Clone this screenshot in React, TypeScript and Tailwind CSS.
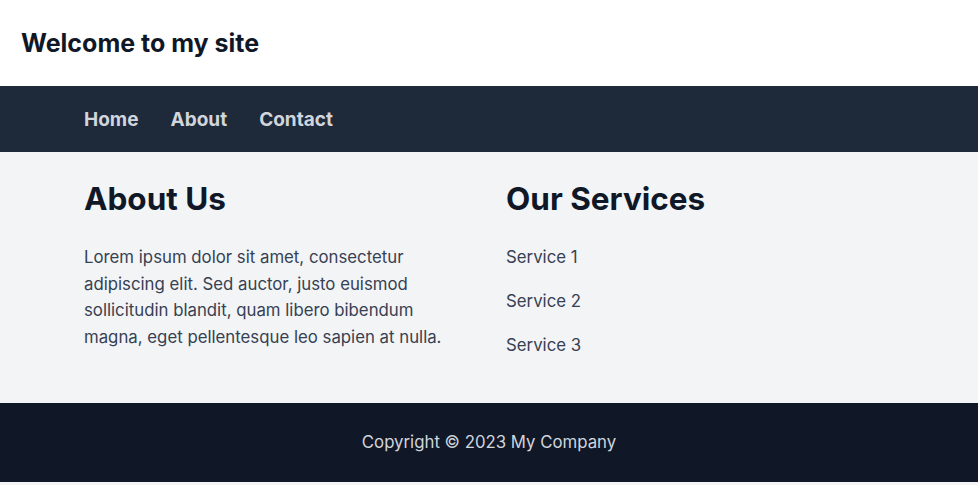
export default function App() {
  const services = ['Service 1', 'Service 2', 'Service 3'];

  return (
    <div className="min-h-screen bg-gray-100 font-['Inter','Liberation_Sans',sans-serif]">
      <header className="bg-white px-[21px] py-[27px]">
        <h1 className="text-[25px] leading-8 font-bold text-gray-900">Welcome to my site</h1>
      </header>

      <nav className="bg-gray-800 px-[84px] pt-[20px] pb-[18px]">
        <ul className="flex gap-8 text-[19px] leading-7 font-bold text-gray-300">
          <li><a href="#">Home</a></li>
          <li><a href="#">About</a></li>
          <li><a href="#">Contact</a></li>
        </ul>
      </nav>

      <main className="grid grid-cols-2 gap-x-[34px] px-[84px] pt-[27px] pb-[46px]">
        <section>
          <h2 className="text-[31.5px] leading-10 font-bold text-gray-900 mb-[25px]">About Us</h2>
          <p className="text-[16.8px] leading-[26.67px] text-gray-700">
            Lorem ipsum dolor sit amet, consectetur adipiscing elit. Sed auctor, justo euismod
            sollicitudin blandit, quam libero bibendum magna, eget pellentesque leo sapien at nulla.
          </p>
        </section>
        <section>
          <h2 className="text-[31.5px] leading-10 font-bold text-gray-900 mb-[26px]">Our Services</h2>
          <ul className="space-y-5 text-[16.8px] leading-6 text-gray-700">
            {services.map((s) => (
              <li key={s}>{s}</li>
            ))}
          </ul>
        </section>
      </main>

      <footer className="bg-gray-900 py-[27px] text-center">
        <p className="text-[16.8px] leading-[25px] text-gray-300">Copyright © 2023 My Company</p>
      </footer>
    </div>
  );
}
